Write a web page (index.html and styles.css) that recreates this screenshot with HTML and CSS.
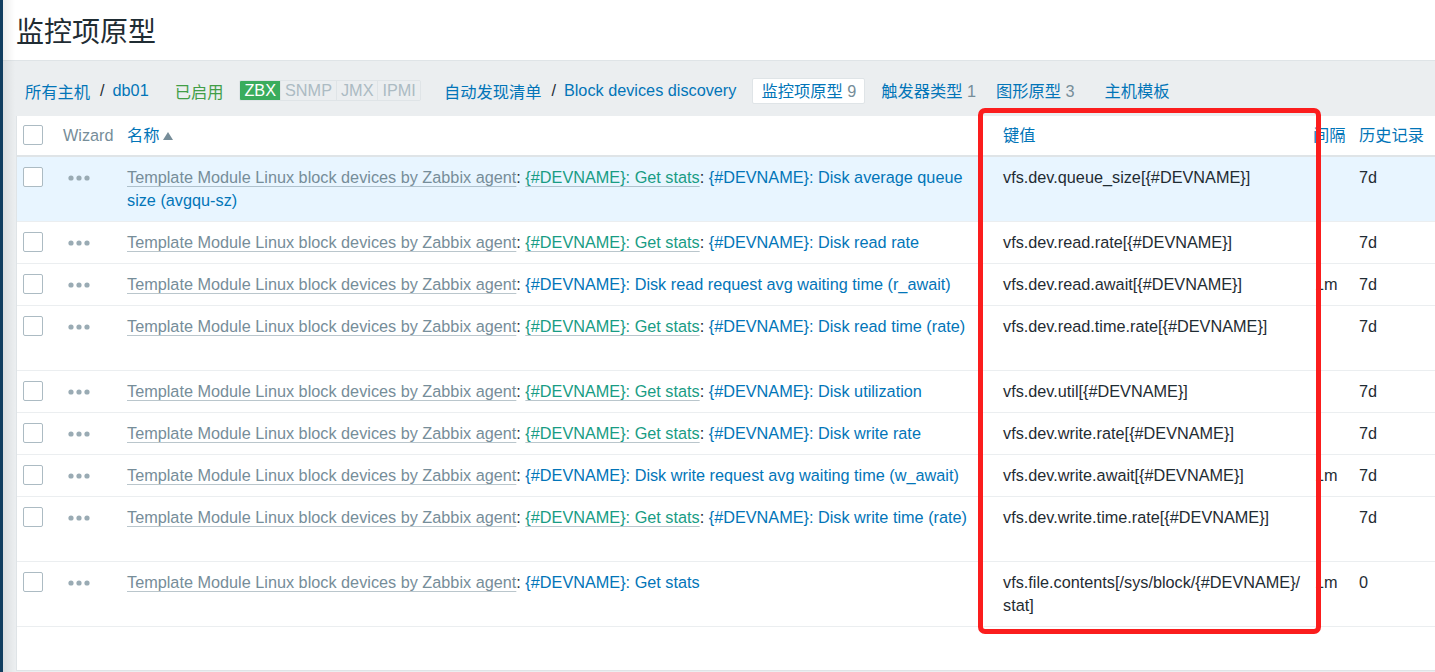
FILE: index.html
```html
<!DOCTYPE html>
<html lang="zh-CN">
<head>
<meta charset="utf-8">
<title>监控项原型</title>
<link rel="stylesheet" href="styles.css">
</head>
<body>
<div class="app">
  <aside class="sidebar"></aside>
  <main class="main">
    <header class="page-header">
      <h1 class="page-title">监控项原型</h1>
    </header>
    <nav class="crumbs">
      <a class="link">所有主机</a><span class="sep">/</span><a class="link">db01</a>
      <span class="status-text">已启用</span>
      <span class="status-box"><span class="st st-on">ZBX</span><span class="st">SNMP</span><span class="st">JMX</span><span class="st">IPMI</span></span>
      <a class="link disc">自动发现清单</a><span class="sep">/</span><a class="link">Block devices discovery</a>
      <span class="tab tab-active"><a class="link">监控项原型</a> <span class="count">9</span></span>
      <span class="tab tab-2"><a class="link">触发器类型</a> <span class="count">1</span></span>
      <span class="tab tab-3"><a class="link">图形原型</a> <span class="count">3</span></span>
      <span class="tab tab-4"><a class="link">主机模板</a></span>
    </nav>
    <section class="list-wrap">
      <table class="list">
        <colgroup>
          <col class="c-check"><col class="c-wiz"><col class="c-name"><col class="c-key"><col class="c-int"><col class="c-hist">
        </colgroup>
        <thead>
          <tr>
            <th><span class="cb"></span></th>
            <th class="muted">Wizard</th>
            <th><a class="link">名称</a><span class="sort-up"></span></th>
            <th><a class="link">键值</a></th>
            <th><a class="link">间隔</a></th>
            <th><a class="link">历史记录</a></th>
          </tr>
        </thead>
        <tbody>
          <tr class="hl">
            <td><span class="cb"></span></td>
            <td><svg class="dots" width="22" height="6" viewBox="0 0 22 6"><circle cx="3" cy="3" r="2.6"/><circle cx="11" cy="3" r="2.6"/><circle cx="19" cy="3" r="2.6"/></svg></td>
            <td><a class="tpl">Template Module Linux block devices by Zabbix agent</a>: <a class="master">{#DEVNAME}: Get stats</a>: <a class="link">{#DEVNAME}: Disk average queue size (avgqu-sz)</a></td>
            <td>vfs.dev.queue_size[{#DEVNAME}]</td>
            <td></td>
            <td>7d</td>
          </tr>
          <tr>
            <td><span class="cb"></span></td>
            <td><svg class="dots" width="22" height="6" viewBox="0 0 22 6"><circle cx="3" cy="3" r="2.6"/><circle cx="11" cy="3" r="2.6"/><circle cx="19" cy="3" r="2.6"/></svg></td>
            <td><a class="tpl">Template Module Linux block devices by Zabbix agent</a>: <a class="master">{#DEVNAME}: Get stats</a>: <a class="link">{#DEVNAME}: Disk read rate</a></td>
            <td>vfs.dev.read.rate[{#DEVNAME}]</td>
            <td></td>
            <td>7d</td>
          </tr>
          <tr>
            <td><span class="cb"></span></td>
            <td><svg class="dots" width="22" height="6" viewBox="0 0 22 6"><circle cx="3" cy="3" r="2.6"/><circle cx="11" cy="3" r="2.6"/><circle cx="19" cy="3" r="2.6"/></svg></td>
            <td><a class="tpl">Template Module Linux block devices by Zabbix agent</a>: <a class="link">{#DEVNAME}: Disk read request avg waiting time (r_await)</a></td>
            <td>vfs.dev.read.await[{#DEVNAME}]</td>
            <td>1m</td>
            <td>7d</td>
          </tr>
          <tr class="tall">
            <td><span class="cb"></span></td>
            <td><svg class="dots" width="22" height="6" viewBox="0 0 22 6"><circle cx="3" cy="3" r="2.6"/><circle cx="11" cy="3" r="2.6"/><circle cx="19" cy="3" r="2.6"/></svg></td>
            <td><a class="tpl">Template Module Linux block devices by Zabbix agent</a>: <a class="master">{#DEVNAME}: Get stats</a>: <a class="link">{#DEVNAME}: Disk read time (rate)</a></td>
            <td>vfs.dev.read.time.rate[{#DEVNAME}]</td>
            <td></td>
            <td>7d</td>
          </tr>
          <tr>
            <td><span class="cb"></span></td>
            <td><svg class="dots" width="22" height="6" viewBox="0 0 22 6"><circle cx="3" cy="3" r="2.6"/><circle cx="11" cy="3" r="2.6"/><circle cx="19" cy="3" r="2.6"/></svg></td>
            <td><a class="tpl">Template Module Linux block devices by Zabbix agent</a>: <a class="master">{#DEVNAME}: Get stats</a>: <a class="link">{#DEVNAME}: Disk utilization</a></td>
            <td>vfs.dev.util[{#DEVNAME}]</td>
            <td></td>
            <td>7d</td>
          </tr>
          <tr>
            <td><span class="cb"></span></td>
            <td><svg class="dots" width="22" height="6" viewBox="0 0 22 6"><circle cx="3" cy="3" r="2.6"/><circle cx="11" cy="3" r="2.6"/><circle cx="19" cy="3" r="2.6"/></svg></td>
            <td><a class="tpl">Template Module Linux block devices by Zabbix agent</a>: <a class="master">{#DEVNAME}: Get stats</a>: <a class="link">{#DEVNAME}: Disk write rate</a></td>
            <td>vfs.dev.write.rate[{#DEVNAME}]</td>
            <td></td>
            <td>7d</td>
          </tr>
          <tr>
            <td><span class="cb"></span></td>
            <td><svg class="dots" width="22" height="6" viewBox="0 0 22 6"><circle cx="3" cy="3" r="2.6"/><circle cx="11" cy="3" r="2.6"/><circle cx="19" cy="3" r="2.6"/></svg></td>
            <td><a class="tpl">Template Module Linux block devices by Zabbix agent</a>: <a class="link">{#DEVNAME}: Disk write request avg waiting time (w_await)</a></td>
            <td>vfs.dev.write.await[{#DEVNAME}]</td>
            <td>1m</td>
            <td>7d</td>
          </tr>
          <tr class="tall">
            <td><span class="cb"></span></td>
            <td><svg class="dots" width="22" height="6" viewBox="0 0 22 6"><circle cx="3" cy="3" r="2.6"/><circle cx="11" cy="3" r="2.6"/><circle cx="19" cy="3" r="2.6"/></svg></td>
            <td><a class="tpl">Template Module Linux block devices by Zabbix agent</a>: <a class="master">{#DEVNAME}: Get stats</a>: <a class="link">{#DEVNAME}: Disk write time (rate)</a></td>
            <td>vfs.dev.write.time.rate[{#DEVNAME}]</td>
            <td></td>
            <td>7d</td>
          </tr>
          <tr>
            <td><span class="cb"></span></td>
            <td><svg class="dots" width="22" height="6" viewBox="0 0 22 6"><circle cx="3" cy="3" r="2.6"/><circle cx="11" cy="3" r="2.6"/><circle cx="19" cy="3" r="2.6"/></svg></td>
            <td><a class="tpl">Template Module Linux block devices by Zabbix agent</a>: <a class="link">{#DEVNAME}: Get stats</a></td>
            <td>vfs.file.contents[/sys/block/{#DEVNAME}/<wbr>stat]</td>
            <td>1m</td>
            <td>0</td>
          </tr>
        </tbody>
      </table>
      <div class="list-foot"></div>
    </section>
  </main>
</div>
<div class="annot"></div>
</body>
</html>
```
FILE: styles.css
```css
* { box-sizing: border-box; }
html, body {
  margin: 0;
  height: 100%;
  overflow: hidden;
}
body {
  background: #ebeef0;
  font-family: "Liberation Sans", "Noto Sans CJK SC", sans-serif;
  font-size: 16.25px;
  color: #1f2c33;
}
a { text-decoration: none; }
.app {
  display: flex;
  height: 100%;
}
.sidebar {
  width: 3px;
  flex: none;
  background: #113d5f;
}
.main {
  flex: 1;
  min-width: 0;
  position: relative;
}
.main::before {
  content: "";
  position: absolute;
  left: 0; top: 0; bottom: 0;
  width: 12px;
  background: linear-gradient(to right, rgba(0,0,0,0.07), rgba(0,0,0,0));
  pointer-events: none;
  z-index: 2;
}
.page-header {
  height: 61px;
  background: #fff;
  border-bottom: 1px solid #dfe4e7;
  display: flex;
  align-items: center;
  padding: 6px 0 0 13px;
}
.page-title {
  margin: 0;
  font-size: 28px;
  font-weight: normal;
  line-height: 34px;
  color: #1f2c33;
}
.crumbs {
  height: 55px;
  padding: 4px 0 0 22px;
  display: flex;
  align-items: center;
  white-space: nowrap;
}
.link { color: #0275b8; }
.sep {
  color: #1f2c33;
  margin: 0 8px 0 10px;
}
.status-text {
  color: #429e47;
  margin-left: 26px;
}
.status-box {
  display: inline-flex;
  margin-left: 16px;
  border: 1px solid #dfe4e7;
  border-radius: 2px;
  height: 21px;
  line-height: 19px;
  overflow: hidden;
}
.st {
  color: #acbbc3;
  padding: 0 4px;
  border-left: 1px solid #dfe4e7;
  background: #ebeef0;
}
.st:first-child { border-left: 0; }
.st-on {
  background: #3aac5d;
  color: #fff;
}
.disc { margin-left: 23px; }
.tab {
  display: inline-block;
  height: 26px;
  line-height: 24px;
  padding: 0 8px;
  border: 1px solid transparent;
  border-radius: 2px;
  white-space: nowrap;
}
.tab-active {
  margin-left: 16px;
  background: #fff;
  border-color: #dfe4e7;
}
.tab-2 { margin-left: 7px; }
.tab-3 { margin-left: 2px; }
.tab-4 { margin-left: 12px; }
.count { color: #768d99; }

.list-wrap {
  margin-left: 13px;
  background: #fff;
  border-left: 1px solid #dfe4e7;
  border-bottom: 1px solid #dfe4e7;
}
.list {
  width: 100%;
  table-layout: fixed;
  border-collapse: collapse;
}
.c-check { width: 38px; }
.c-wiz { width: 64px; }
.c-name { width: 876px; }
.c-key { width: 311px; }
.c-int { width: 45px; }
.list th, .list td {
  text-align: left;
  vertical-align: top;
  line-height: 23px;
  padding: 9px 8px 9px 8px;
  font-weight: normal;
  white-space: normal;
  overflow-wrap: break-word;
}
.list th {
  padding-top: 8px;
  padding-bottom: 8px;
  border-bottom: 2px solid #dfe4e7;
  white-space: nowrap;
  overflow: visible;
}
.list th:first-child, .list td:first-child { padding-left: 6px; padding-right: 0; }
.list td { border-bottom: 1px solid #ebeef0; }
.list td:nth-child(4) { padding-right: 3px; }
.list th:nth-child(5) { padding-left: 7px; padding-right: 0; }
.list td:nth-child(5) { white-space: nowrap; overflow: visible; padding-left: 9px; padding-right: 0; }
.list tr.hl td { background: #e8f5ff; }
.list tr.tall td { height: 65px; }
.muted { color: #768d99; }
.cb {
  display: inline-block;
  width: 20px;
  height: 20px;
  border: 1px solid #acbbc3;
  border-radius: 2px;
  background: #fff;
  vertical-align: top;
  margin-top: 1px;
}
.dots {
  display: block;
  margin: 9px 0 0 5px;
  fill: #9aabb4;
}
.sort-up {
  display: inline-block;
  width: 0; height: 0;
  border-left: 5px solid transparent;
  border-right: 5px solid transparent;
  border-bottom: 8px solid #768d99;
  margin-left: 3px;
  vertical-align: 1px;
}
.tpl {
  color: #768d99;
  text-decoration: underline;
  text-decoration-color: rgba(118, 141, 153, 0.5);
  text-underline-offset: 3px;
}
.master {
  color: #189c84;
  text-decoration: underline;
  text-decoration-color: rgba(118, 141, 153, 0.5);
  text-underline-offset: 3px;
}
.list-foot { height: 43px; }

.annot {
  position: absolute;
  left: 978px;
  top: 108px;
  width: 343px;
  height: 526px;
  border: 5px solid #fb1d1d;
  border-radius: 7px;
  pointer-events: none;
}
```
